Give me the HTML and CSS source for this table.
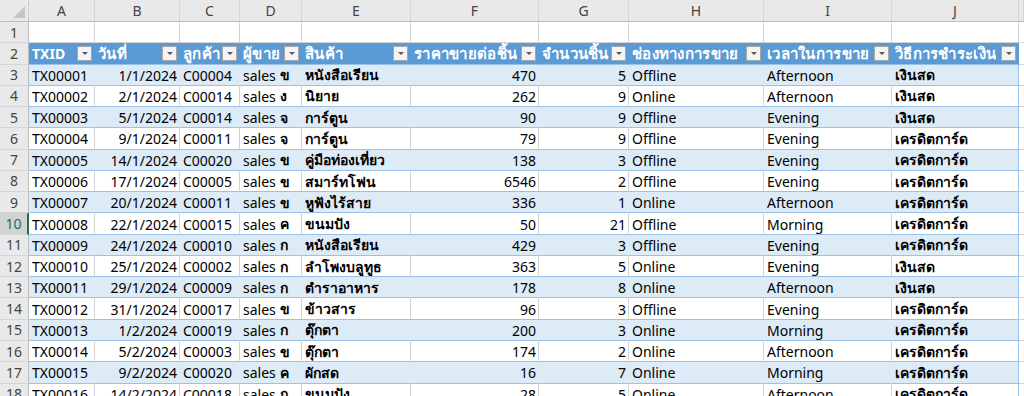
FILE: index.html
```html
<!DOCTYPE html>
<html lang="th">
<head>
<meta charset="utf-8">
<title>Sales sheet</title>
<link rel="stylesheet" href="styles.css">
</head>
<body>
<div class="sheet">
  <div class="colhead">
    <div class="corner"><span class="tri"></span></div>
    <div class="ch">A</div><div class="ch">B</div><div class="ch">C</div><div class="ch">D</div><div class="ch">E</div>
    <div class="ch">F</div><div class="ch">G</div><div class="ch">H</div><div class="ch">I</div><div class="ch">J</div><div class="ch"></div>
  </div>

  <div class="row blank">
    <div class="rh">1</div>
    <div class="c"></div><div class="c"></div><div class="c"></div><div class="c"></div><div class="c"></div>
    <div class="c"></div><div class="c"></div><div class="c"></div><div class="c"></div><div class="c"></div><div class="c"></div>
  </div>

  <div class="row thead">
    <div class="rh">2</div>
    <div class="c"><span class="ht en">TXID</span><span class="dd"></span></div>
    <div class="c"><span class="ht">วันที่</span><span class="dd"></span></div>
    <div class="c"><span class="ht">ลูกค้า</span><span class="dd"></span></div>
    <div class="c"><span class="ht">ผู้ขาย</span><span class="dd"></span></div>
    <div class="c"><span class="ht">สินค้า</span><span class="dd"></span></div>
    <div class="c"><span class="ht">ราคาขายต่อชิ้น</span><span class="dd"></span></div>
    <div class="c"><span class="ht">จำนวนชิ้น</span><span class="dd"></span></div>
    <div class="c"><span class="ht">ช่องทางการขาย</span><span class="dd"></span></div>
    <div class="c"><span class="ht">เวลาในการขาย</span><span class="dd"></span></div>
    <div class="c"><span class="ht">วิธีการชำระเงิน</span><span class="dd"></span></div>
    <div class="c out"></div>
  </div>

  <div class="row band"><div class="rh">3</div><div class="c">TX00001</div><div class="c n">1/1/2024</div><div class="c">C00004</div><div class="c">sales <b>ข</b></div><div class="c t">หนังสือเรียน</div><div class="c n">470</div><div class="c n">5</div><div class="c">Offline</div><div class="c">Afternoon</div><div class="c t last">เงินสด</div><div class="c out"></div></div>
  <div class="row"><div class="rh">4</div><div class="c">TX00002</div><div class="c n">2/1/2024</div><div class="c">C00014</div><div class="c">sales <b>ง</b></div><div class="c t">นิยาย</div><div class="c n">262</div><div class="c n">9</div><div class="c">Online</div><div class="c">Afternoon</div><div class="c t last">เงินสด</div><div class="c out"></div></div>
  <div class="row band"><div class="rh">5</div><div class="c">TX00003</div><div class="c n">5/1/2024</div><div class="c">C00014</div><div class="c">sales <b>จ</b></div><div class="c t">การ์ตูน</div><div class="c n">90</div><div class="c n">9</div><div class="c">Offline</div><div class="c">Evening</div><div class="c t last">เงินสด</div><div class="c out"></div></div>
  <div class="row"><div class="rh">6</div><div class="c">TX00004</div><div class="c n">9/1/2024</div><div class="c">C00011</div><div class="c">sales <b>จ</b></div><div class="c t">การ์ตูน</div><div class="c n">79</div><div class="c n">9</div><div class="c">Offline</div><div class="c">Evening</div><div class="c t last">เครดิตการ์ด</div><div class="c out"></div></div>
  <div class="row band"><div class="rh">7</div><div class="c">TX00005</div><div class="c n">14/1/2024</div><div class="c">C00020</div><div class="c">sales <b>ข</b></div><div class="c t">คู่มือท่องเที่ยว</div><div class="c n">138</div><div class="c n">3</div><div class="c">Offline</div><div class="c">Evening</div><div class="c t last">เครดิตการ์ด</div><div class="c out"></div></div>
  <div class="row"><div class="rh">8</div><div class="c">TX00006</div><div class="c n">17/1/2024</div><div class="c">C00005</div><div class="c">sales <b>ข</b></div><div class="c t">สมาร์ทโฟน</div><div class="c n">6546</div><div class="c n">2</div><div class="c">Offline</div><div class="c">Evening</div><div class="c t last">เครดิตการ์ด</div><div class="c out"></div></div>
  <div class="row band"><div class="rh">9</div><div class="c">TX00007</div><div class="c n">20/1/2024</div><div class="c">C00011</div><div class="c">sales <b>ข</b></div><div class="c t">หูฟังไร้สาย</div><div class="c n">336</div><div class="c n">1</div><div class="c">Online</div><div class="c">Afternoon</div><div class="c t last">เครดิตการ์ด</div><div class="c out"></div></div>
  <div class="row"><div class="rh active">10</div><div class="c">TX00008</div><div class="c n">22/1/2024</div><div class="c">C00015</div><div class="c">sales <b>ค</b></div><div class="c t">ขนมปัง</div><div class="c n">50</div><div class="c n">21</div><div class="c">Offline</div><div class="c">Morning</div><div class="c t last">เครดิตการ์ด</div><div class="c out"></div></div>
  <div class="row band"><div class="rh">11</div><div class="c">TX00009</div><div class="c n">24/1/2024</div><div class="c">C00010</div><div class="c">sales <b>ก</b></div><div class="c t">หนังสือเรียน</div><div class="c n">429</div><div class="c n">3</div><div class="c">Offline</div><div class="c">Evening</div><div class="c t last">เครดิตการ์ด</div><div class="c out"></div></div>
  <div class="row"><div class="rh">12</div><div class="c">TX00010</div><div class="c n">25/1/2024</div><div class="c">C00002</div><div class="c">sales <b>ก</b></div><div class="c t">ลำโพงบลูทูธ</div><div class="c n">363</div><div class="c n">5</div><div class="c">Online</div><div class="c">Evening</div><div class="c t last">เงินสด</div><div class="c out"></div></div>
  <div class="row band"><div class="rh">13</div><div class="c">TX00011</div><div class="c n">29/1/2024</div><div class="c">C00009</div><div class="c">sales <b>ก</b></div><div class="c t">ตำราอาหาร</div><div class="c n">178</div><div class="c n">8</div><div class="c">Online</div><div class="c">Afternoon</div><div class="c t last">เงินสด</div><div class="c out"></div></div>
  <div class="row"><div class="rh">14</div><div class="c">TX00012</div><div class="c n">31/1/2024</div><div class="c">C00017</div><div class="c">sales <b>ข</b></div><div class="c t">ข้าวสาร</div><div class="c n">96</div><div class="c n">3</div><div class="c">Offline</div><div class="c">Evening</div><div class="c t last">เครดิตการ์ด</div><div class="c out"></div></div>
  <div class="row band"><div class="rh">15</div><div class="c">TX00013</div><div class="c n">1/2/2024</div><div class="c">C00019</div><div class="c">sales <b>ก</b></div><div class="c t">ตุ๊กตา</div><div class="c n">200</div><div class="c n">3</div><div class="c">Online</div><div class="c">Morning</div><div class="c t last">เครดิตการ์ด</div><div class="c out"></div></div>
  <div class="row"><div class="rh">16</div><div class="c">TX00014</div><div class="c n">5/2/2024</div><div class="c">C00003</div><div class="c">sales <b>ข</b></div><div class="c t">ตุ๊กตา</div><div class="c n">174</div><div class="c n">2</div><div class="c">Online</div><div class="c">Afternoon</div><div class="c t last">เครดิตการ์ด</div><div class="c out"></div></div>
  <div class="row band"><div class="rh">17</div><div class="c">TX00015</div><div class="c n">9/2/2024</div><div class="c">C00020</div><div class="c">sales <b>ค</b></div><div class="c t">ผักสด</div><div class="c n">16</div><div class="c n">7</div><div class="c">Online</div><div class="c">Morning</div><div class="c t last">เครดิตการ์ด</div><div class="c out"></div></div>
  <div class="row"><div class="rh">18</div><div class="c">TX00016</div><div class="c n">14/2/2024</div><div class="c">C00018</div><div class="c">sales <b>ก</b></div><div class="c t">ขนมปัง</div><div class="c n">28</div><div class="c n">5</div><div class="c">Online</div><div class="c">Afternoon</div><div class="c t last">เครดิตการ์ด</div><div class="c out"></div></div>
</div>
</body>
</html>
```

FILE: styles.css
```css
* { box-sizing: border-box; }

html, body {
  margin: 0;
  padding: 0;
  background: #ffffff;
  overflow: hidden;
}

.sheet {
  --cols: 29px 66px 85px 60px 62px 109px 128px 90px 135px 128px 127px 1fr;
  width: 1024px;
  height: 396px;
  overflow: hidden;
  font-family: "Noto Sans", "Open Sans", sans-serif;
  font-size: 14px;
  color: #000000;
}

.colhead {
  display: grid;
  grid-template-columns: var(--cols);
  height: 22px;
  background: #e9e9e9;
  border-bottom: 1px solid #bdbdbd;
}

.corner {
  position: relative;
  border-right: 1px solid #cfcfcf;
}

.tri {
  position: absolute;
  right: 3px;
  bottom: 3px;
  width: 0;
  height: 0;
  border-left: 12px solid transparent;
  border-bottom: 12px solid #c4c4c4;
}

.ch {
  display: flex;
  align-items: center;
  justify-content: center;
  border-right: 1px solid #d6d6d6;
  color: #444444;
  font-size: 14px;
}

.row {
  display: grid;
  grid-template-columns: var(--cols);
  height: 21.27px;
}

.rh {
  display: flex;
  align-items: center;
  justify-content: center;
  background: #e9e9e9;
  color: #444444;
  border-right: 1px solid #bdbdbd;
  border-bottom: 1px solid #d6d6d6;
  font-size: 14px;
}

.rh.active {
  background: #d2d2d2;
  color: #217346;
  border-right: 2px solid #217346;
}

.c {
  display: flex;
  align-items: center;
  padding: 1px 3px 0 3px;
  white-space: nowrap;
  overflow: hidden;
  border-right: 1px solid #d4d4d4;
  border-bottom: 1px solid #9bc2e6;
}

.c b {
  font-weight: 700;
  margin-left: 4px;
}

.c.n { justify-content: flex-end; padding-right: 2px; }

.c.t { font-weight: 700; }

.c.last { border-right-color: #9bc2e6; }

.c.out { border-bottom-color: #d4d4d4; background: #ffffff; }

.row.band .c { background: #ddebf7; border-right-color: #ddebf7; }
.row.band .c.last { border-right-color: #9bc2e6; }
.row.band .c.out { background: #ffffff; border-right-color: #d4d4d4; }

.row.blank .c { border-bottom-color: #d4d4d4; }

.row.thead .c {
  background: #5b9bd5;
  border-right-color: #5b9bd5;
  color: #ffffff;
  font-weight: 700;
  justify-content: space-between;
  padding-right: 2px;
  gap: 1px;
}

.row.thead .c.out {
  background: #ffffff;
  border-right-color: #d4d4d4;
  border-bottom-color: #d4d4d4;
}

.ht {
  overflow: hidden;
  font-size: 15px;
  letter-spacing: 0.3px;
}

.ht.en {
  font-size: 14px;
  letter-spacing: 0;
}

.dd {
  position: relative;
  flex: 0 0 auto;
  width: 15px;
  height: 15px;
  background: #f4f4f4;
  border: 1px solid #a6a6a6;
}

.dd::after {
  content: "";
  position: absolute;
  left: 4px;
  top: 5px;
  border-left: 3px solid transparent;
  border-right: 3px solid transparent;
  border-top: 3px solid #595959;
}
```
